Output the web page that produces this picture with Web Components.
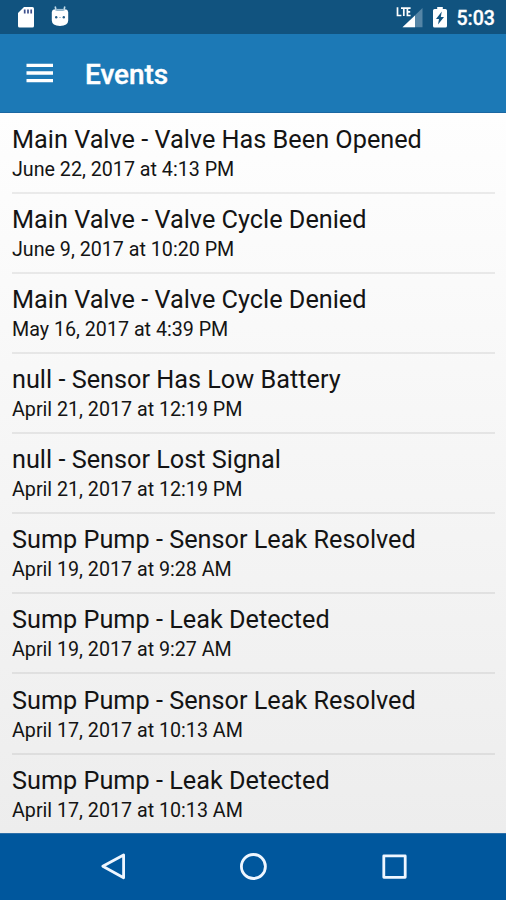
<!DOCTYPE html>
<html lang="en">
<head>
<meta charset="utf-8">
<title>Events</title>
<style>
  html, body { margin: 0; height: 100%; overflow: hidden; }
  body { font-family: Roboto, "Liberation Sans", sans-serif; }
</style>
</head>
<body>
<events-screen></events-screen>
<script>
  const define = (name, html, setup) => {
    const template = document.createElement('template');
    template.innerHTML = html;
    customElements.define(name, class extends HTMLElement {
      constructor() {
        super();
        this.attachShadow({ mode: 'open' }).append(template.content.cloneNode(true));
      }
      connectedCallback() { if (setup) setup(this.shadowRoot, this); }
    });
  };

  define('status-bar', `
    <style>
      :host { display: flex; height: 34px; box-sizing: border-box; background: #11537f; color: #fff; padding: 0 11px 0 17px; justify-content: space-between; }
      div { display: flex; }
      svg { display: block; flex: none; }
      .left { gap: 16px; }
      .signal { margin-right: 10px; }
      .battery { margin-right: 9px; }
      .time { font-size: 19.6px; font-weight: 500; line-height: 38px; -webkit-text-stroke: .3px #fff; }
    </style>
    <div class="left">
      <svg width="18" height="34" viewBox="0 0 18 34"><path d="M7 7H15.4Q17 7 17 8.6V26Q17 27.5 15.4 27.5H2.6Q1 27.5 1 26V13Z" fill="#fff"/><path d="M7.7 9.5v4M11 9.5v4M14.2 9.5v4" stroke="#3d4f8c" stroke-width="1.7"/></svg>
      <svg width="18" height="34" viewBox="0 0 18 34"><path d="M4.2 6.5L5.2 11M13.8 6.5L12.8 11" stroke="#c4dcea" stroke-width="1.6"/><path d="M.8 12Q1.2 9.6 3.5 9.3L5 11H13L14.5 9.3Q16.8 9.6 17.2 12V20.5Q17 25.9 9 25.9T.8 20.5Z" fill="#fff"/><path d="M5.5 9.9h7" stroke="#9fbfd3" stroke-width="2"/><circle cx="5.2" cy="17.3" r="1.2" fill="#285f88"/><circle cx="12.8" cy="17.3" r="1.2" fill="#285f88"/><path d="M8 17.5h2" stroke="#b7cbd8"/></svg>
    </div>
    <div>
      <svg class="signal" width="27" height="34" viewBox="0 0 27 34"><path d="M26.5 8V27.3H6.5Z" fill="#5585a6"/><path d="M19 8H14V20L19 15Z" fill="#11537f"/><path d="M19 15.4V27.3H6.5Z" fill="#fff"/><path d="M1.5 7.3V15.5H5.4M5 8.2H10.6M7.8 8.2V16M14.6 8.2H11.4V15.5H14.6M11.4 11.8H14.2" fill="none" stroke="#fff" stroke-width="1.7"/></svg>
      <svg class="battery" width="14" height="34" viewBox="0 0 14 34"><path d="M4.2 7H9.8V9H12.4Q14 9 14 10.5V26Q14 27.5 12.4 27.5H1.6Q0 27.5 0 26V10.5Q0 9 1.6 9H4.2Z" fill="#fff"/><path d="M8.8 11.5L3 19H6L5 24.5L11 17H7.8Z" fill="#11537f"/></svg>
      <span class="time">5:03</span>
    </div>`);

  define('app-bar', `
    <style>
      :host { display: flex; height: 79px; box-sizing: border-box; align-items: center; gap: 32px; padding-left: 26px; background: #1c79b6; border-bottom: 1px solid #1a67a2; color: #fff; }
      svg { display: block; }
      h1 { margin: 0; font-size: 27.9px; line-height: 34px; font-weight: 500; padding-top: 4px; -webkit-text-stroke: .4px #fff; }
    </style>
    <svg width="27" height="20" viewBox="0 0 27 20"><path d="M.5 2.3H27M.5 10H27M.5 17.7H27" stroke="#fff" stroke-width="3.3"/></svg>
    <h1><slot></slot></h1>`);

  define('event-row', `
    <style>
      :host { display: block; height: 80.15px; box-sizing: border-box; padding-top: 11.2px; border-bottom: 2px solid #00000012; color: #141414; white-space: nowrap; }
      :host(:last-child) { border-bottom-color: transparent; }
      .title { font-size: 25.25px; line-height: 30px; }
      .date { font-size: 19.68px; line-height: 24px; margin-top: 3px; }
    </style>
    <div class="title"><slot></slot></div>
    <div class="date"></div>`,
    (root, host) => { root.querySelector('.date').textContent = host.getAttribute('date'); });

  define('event-list', `
    <style>
      :host { display: block; flex: 1; min-height: 0; overflow: hidden; padding: .4px 11px 0 12px; background: linear-gradient(#fefefe, #ededed); }
    </style>
    <slot></slot>`);

  define('nav-bar', `
    <style>
      :host { display: flex; height: 67px; box-sizing: border-box; background: #00579d; border-top: 1px solid #2d6fa8; justify-content: center; gap: 112.5px; padding-top: 18px; }
      svg { display: block; flex: none; }
      path, circle, rect { fill: none; stroke: #eef6ff; stroke-width: 2.8; stroke-linejoin: round; }
    </style>
    <svg width="28" height="28" viewBox="0 0 28 28"><path d="M24.6 2.9V25.8L3.8 14.3Z"/></svg>
    <svg width="28" height="28" viewBox="0 0 28 28"><circle cx="14.4" cy="14.5" r="12"/></svg>
    <svg width="28" height="28" viewBox="0 0 28 28"><rect x="3.8" y="3.9" width="21.4" height="21.4"/></svg>`);

  define('events-screen', `
    <style>
      :host { display: flex; flex-direction: column; width: 506px; height: 900px; overflow: hidden; }
      status-bar, app-bar, nav-bar { flex: none; }
    </style>
    <status-bar></status-bar>
    <app-bar>Events</app-bar>
    <event-list>
      <event-row date="June 22, 2017 at 4:13 PM">Main Valve - Valve Has Been Opened</event-row>
      <event-row date="June 9, 2017 at 10:20 PM">Main Valve - Valve Cycle Denied</event-row>
      <event-row date="May 16, 2017 at 4:39 PM">Main Valve - Valve Cycle Denied</event-row>
      <event-row date="April 21, 2017 at 12:19 PM">null - Sensor Has Low Battery</event-row>
      <event-row date="April 21, 2017 at 12:19 PM">null - Sensor Lost Signal</event-row>
      <event-row date="April 19, 2017 at 9:28 AM">Sump Pump - Sensor Leak Resolved</event-row>
      <event-row date="April 19, 2017 at 9:27 AM">Sump Pump - Leak Detected</event-row>
      <event-row date="April 17, 2017 at 10:13 AM">Sump Pump - Sensor Leak Resolved</event-row>
      <event-row date="April 17, 2017 at 10:13 AM">Sump Pump - Leak Detected</event-row>
    </event-list>
    <nav-bar></nav-bar>`);
</script>
</body>
</html>
